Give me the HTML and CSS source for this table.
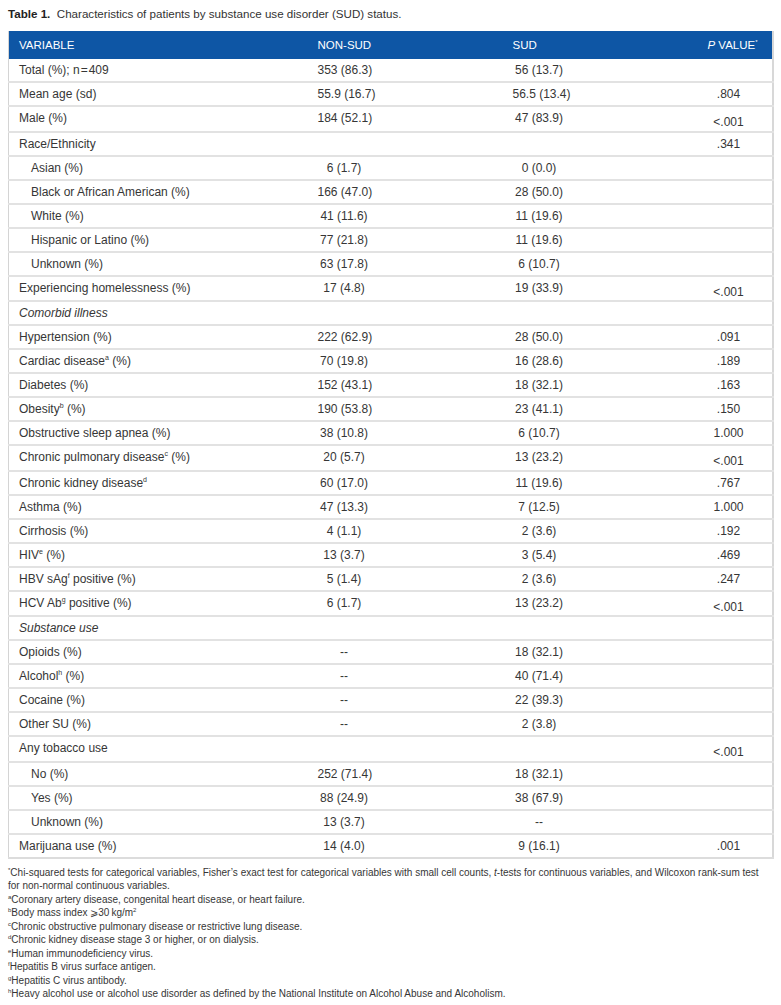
FILE: index.html
```html
<!DOCTYPE html>
<html>
<head>
<meta charset="utf-8">
<link rel="stylesheet" href="styles.css">
</head>
<body>
<div class="page">
  <p class="caption"><b>Table 1.</b>&nbsp; Characteristics of patients by substance use disorder (SUD) status.</p>
  <table class="tbl">
    <colgroup><col class="c1"><col class="c2"><col class="c3"><col class="c4"></colgroup>
    <thead>
      <tr><th>VARIABLE</th><th>NON-SUD</th><th>SUD</th><th><i>P</i> VALUE<sup>*</sup></th></tr>
    </thead>
    <tbody>
      <tr><td>Total (%); n&#8202;=&#8202;409</td><td><span class="v">353 (86.3)</span></td><td><span class="v">56 (13.7)</span></td><td></td></tr>
      <tr><td>Mean age (sd)</td><td><span class="v">55.9 (16.7)</span></td><td><span class="v">56.5 (13.4)</span></td><td><span class="p">.804</span></td></tr>
      <tr><td>Male (%)</td><td><span class="v">184 (52.1)</span></td><td><span class="v">47 (83.9)</span></td><td class="ltc"><span class="p">&lt;.001</span></td></tr>
      <tr><td>Race/Ethnicity</td><td></td><td></td><td><span class="p">.341</span></td></tr>
      <tr><td class="ind">Asian (%)</td><td><span class="v">6 (1.7)</span></td><td><span class="v">0 (0.0)</span></td><td></td></tr>
      <tr><td class="ind">Black or African American (%)</td><td><span class="v">166 (47.0)</span></td><td><span class="v">28 (50.0)</span></td><td></td></tr>
      <tr><td class="ind">White (%)</td><td><span class="v">41 (11.6)</span></td><td><span class="v">11 (19.6)</span></td><td></td></tr>
      <tr><td class="ind">Hispanic or Latino (%)</td><td><span class="v">77 (21.8)</span></td><td><span class="v">11 (19.6)</span></td><td></td></tr>
      <tr><td class="ind">Unknown (%)</td><td><span class="v">63 (17.8)</span></td><td><span class="v">6 (10.7)</span></td><td></td></tr>
      <tr><td>Experiencing homelessness (%)</td><td><span class="v">17 (4.8)</span></td><td><span class="v">19 (33.9)</span></td><td class="ltc"><span class="p">&lt;.001</span></td></tr>
      <tr><td><i>Comorbid illness</i></td><td></td><td></td><td></td></tr>
      <tr><td>Hypertension (%)</td><td><span class="v">222 (62.9)</span></td><td><span class="v">28 (50.0)</span></td><td><span class="p">.091</span></td></tr>
      <tr><td>Cardiac disease<sup>a</sup> (%)</td><td><span class="v">70 (19.8)</span></td><td><span class="v">16 (28.6)</span></td><td><span class="p">.189</span></td></tr>
      <tr><td>Diabetes (%)</td><td><span class="v">152 (43.1)</span></td><td><span class="v">18 (32.1)</span></td><td><span class="p">.163</span></td></tr>
      <tr><td>Obesity<sup>b</sup> (%)</td><td><span class="v">190 (53.8)</span></td><td><span class="v">23 (41.1)</span></td><td><span class="p">.150</span></td></tr>
      <tr><td>Obstructive sleep apnea (%)</td><td><span class="v">38 (10.8)</span></td><td><span class="v">6 (10.7)</span></td><td><span class="p">1.000</span></td></tr>
      <tr><td>Chronic pulmonary disease<sup>c</sup> (%)</td><td><span class="v">20 (5.7)</span></td><td><span class="v">13 (23.2)</span></td><td class="ltc"><span class="p">&lt;.001</span></td></tr>
      <tr><td>Chronic kidney disease<sup>d</sup></td><td><span class="v">60 (17.0)</span></td><td><span class="v">11 (19.6)</span></td><td><span class="p">.767</span></td></tr>
      <tr><td>Asthma (%)</td><td><span class="v">47 (13.3)</span></td><td><span class="v">7 (12.5)</span></td><td><span class="p">1.000</span></td></tr>
      <tr><td>Cirrhosis (%)</td><td><span class="v">4 (1.1)</span></td><td><span class="v">2 (3.6)</span></td><td><span class="p">.192</span></td></tr>
      <tr><td>HIV<sup>e</sup> (%)</td><td><span class="v">13 (3.7)</span></td><td><span class="v">3 (5.4)</span></td><td><span class="p">.469</span></td></tr>
      <tr><td>HBV sAg<sup>f</sup> positive (%)</td><td><span class="v">5 (1.4)</span></td><td><span class="v">2 (3.6)</span></td><td><span class="p">.247</span></td></tr>
      <tr><td>HCV Ab<sup>g</sup> positive (%)</td><td><span class="v">6 (1.7)</span></td><td><span class="v">13 (23.2)</span></td><td class="ltc"><span class="p">&lt;.001</span></td></tr>
      <tr><td><i>Substance use</i></td><td></td><td></td><td></td></tr>
      <tr><td>Opioids (%)</td><td><span class="v">--</span></td><td><span class="v">18 (32.1)</span></td><td></td></tr>
      <tr><td>Alcohol<sup>h</sup> (%)</td><td><span class="v">--</span></td><td><span class="v">40 (71.4)</span></td><td></td></tr>
      <tr><td>Cocaine (%)</td><td><span class="v">--</span></td><td><span class="v">22 (39.3)</span></td><td></td></tr>
      <tr><td>Other SU (%)</td><td><span class="v">--</span></td><td><span class="v">2 (3.8)</span></td><td></td></tr>
      <tr><td>Any tobacco use</td><td></td><td></td><td class="ltc"><span class="p">&lt;.001</span></td></tr>
      <tr><td class="ind">No (%)</td><td><span class="v">252 (71.4)</span></td><td><span class="v">18 (32.1)</span></td><td></td></tr>
      <tr><td class="ind">Yes (%)</td><td><span class="v">88 (24.9)</span></td><td><span class="v">38 (67.9)</span></td><td></td></tr>
      <tr><td class="ind">Unknown (%)</td><td><span class="v">13 (3.7)</span></td><td><span class="v">--</span></td><td></td></tr>
      <tr><td>Marijuana use (%)</td><td><span class="v">14 (4.0)</span></td><td><span class="v">9 (16.1)</span></td><td><span class="p">.001</span></td></tr>
    </tbody>
  </table>
  <div class="notes">
    <p><sup>*</sup>Chi-squared tests for categorical variables, Fisher’s exact test for categorical variables with small cell counts, <i>t</i>-tests for continuous variables, and Wilcoxon rank-sum test for non-normal continuous variables.</p>
    <p><sup>a</sup>Coronary artery disease, congenital heart disease, or heart failure.</p>
    <p><sup>b</sup>Body mass index ⩾30&#8201;kg/m<sup>2</sup></p>
    <p><sup>c</sup>Chronic obstructive pulmonary disease or restrictive lung disease.</p>
    <p><sup>d</sup>Chronic kidney disease stage 3 or higher, or on dialysis.</p>
    <p><sup>e</sup>Human immunodeficiency virus.</p>
    <p><sup>f</sup>Hepatitis B virus surface antigen.</p>
    <p><sup>g</sup>Hepatitis C virus antibody.</p>
    <p><sup>h</sup>Heavy alcohol use or alcohol use disorder as defined by the National Institute on Alcohol Abuse and Alcoholism.</p>
  </div>
</div>
</body>
</html>
```
FILE: styles.css
```css
html, body {
  margin: 0;
  padding: 0;
  background: #ffffff;
}
.page {
  padding: 6px 9px 0 8px;
  font-family: "Liberation Sans", Arial, sans-serif;
  color: #363636;
}
.caption {
  margin: 0 0 10px 0;
  font-size: 11.6px;
  line-height: 15px;
  color: #333333;
}
.caption b {
  color: #222222;
}
.tbl {
  width: 764px;
  border-collapse: collapse;
  table-layout: fixed;
  font-size: 12px;
  border-left: 1px solid #d4d4d4;
  border-right: 2px solid #d8d8d8;
}
.c1 { width: 299px; }
.c2 { width: 195px; }
.c3 { width: 195px; }
.c4 { width: 75px; }
.tbl th {
  background: #0e56a5;
  color: #ffffff;
  font-weight: normal;
  font-size: 11.5px;
  text-align: left;
  height: 28px;
  padding: 0 0 0 10px;
  vertical-align: middle;
  line-height: 16px;
}
.tbl th sup {
  font-size: 6px;
  vertical-align: top;
  line-height: 10px;
}
.tbl td {
  padding: 3px 0 3px 10px;
  line-height: 16px;
  height: 16px;
  vertical-align: top;
  border-bottom: 2px solid #e2e2e2;
  white-space: nowrap;
}
.tbl tr:last-child td {
  border-bottom: 2px solid #dcdcdc;
}
.tbl td.ind {
  padding-left: 22px;
}
.tbl td.ltc {
  padding-top: 8px;
  padding-bottom: 0;
  height: 15.5px;
  line-height: 15px;
}
.tbl td sup {
  font-size: 7px;
  vertical-align: top;
  line-height: 10px;
}
.v {
  display: inline-block;
  width: 53px;
  text-align: center;
}
.p {
  display: inline-block;
  width: 42px;
  text-align: center;
}
.notes {
  margin-top: 7px;
  font-size: 10px;
  line-height: 13.5px;
  color: #363636;
}
.notes p {
  margin: 0;
}
.notes sup {
  font-size: 6px;
  vertical-align: top;
  line-height: 8px;
}
```
